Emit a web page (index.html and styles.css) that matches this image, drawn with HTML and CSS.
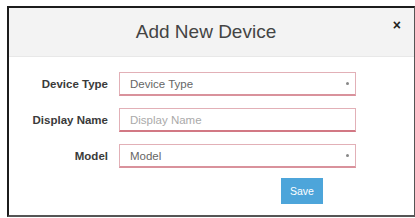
FILE: index.html
```html
<!DOCTYPE html>
<html>
<head>
<meta charset="utf-8">
<link rel="stylesheet" href="styles.css">
</head>
<body>
<div class="frame">
  <div class="modal-header">
    <h4 class="modal-title">Add New Device</h4>
    <span class="close">&times;</span>
  </div>
  <div class="modal-body">
    <div class="row">
      <label class="label">Device Type</label>
      <div class="input select"><span class="value">Device Type</span><span class="caret"></span></div>
    </div>
    <div class="row">
      <label class="label">Display Name</label>
      <div class="input text"><span class="placeholder">Display Name</span></div>
    </div>
    <div class="row">
      <label class="label">Model</label>
      <div class="input select"><span class="value">Model</span><span class="caret"></span></div>
    </div>
    <div class="actions">
      <button class="btn">Save</button>
    </div>
  </div>
</div>
</body>
</html>
```

FILE: styles.css
```css
html, body {
  margin: 0;
  padding: 0;
  background: #ffffff;
  font-family: "Liberation Sans", Arial, sans-serif;
}
.frame {
  margin: 6px 0 0 7px;
  width: 408px;
  height: 211px;
  box-sizing: border-box;
  border-top: 2px solid #1c1c1c;
  border-left: 2px solid #1c1c1c;
  border-right: 1px solid #555;
  border-bottom: 2px solid #555;
  background: #fff;
  position: relative;
}
.modal-header {
  height: 48px;
  background: #f3f3f3;
  border-bottom: 1px solid #e8e8e8;
  display: flex;
  align-items: center;
  justify-content: center;
  position: relative;
}
.modal-title {
  margin: 0;
  font-size: 19px;
  font-weight: normal;
  color: #444;
  padding-right: 11px;
}
.close {
  position: absolute;
  right: 13px;
  top: 9px;
  font-size: 14px;
  font-weight: bold;
  color: #222;
}
.modal-body {
  padding-top: 15px;
  display: flex;
  flex-direction: column;
  gap: 12px;
}
.row {
  display: flex;
  align-items: center;
  height: 24px;
}
.label {
  width: 99px;
  text-align: right;
  font-size: 11.5px;
  font-weight: bold;
  color: #3a3a3a;
  margin-right: 11px;
}
.input {
  width: 237px;
  height: 24px;
  box-sizing: border-box;
  border: 1px solid #e2b0b7;
  border-bottom: 2px solid #d9929c;
  display: flex;
  align-items: center;
  padding: 0 6px 0 10px;
  font-size: 11.5px;
  color: #666;
}
.input.text {
  border-bottom-color: #d27884;
}
.value {
  flex: 1;
}
.placeholder {
  color: #aaa;
}
.caret {
  width: 3px;
  height: 3px;
  background: #888;
  border-radius: 50%;
}
.actions {
  padding-left: 272px;
}
.btn {
  width: 42px;
  height: 26px;
  margin-top: -2px;
  border: none;
  background: #4da5da;
  color: #fff;
  font-family: "Liberation Sans", Arial, sans-serif;
  font-size: 10.5px;
  padding: 0;
}
```
